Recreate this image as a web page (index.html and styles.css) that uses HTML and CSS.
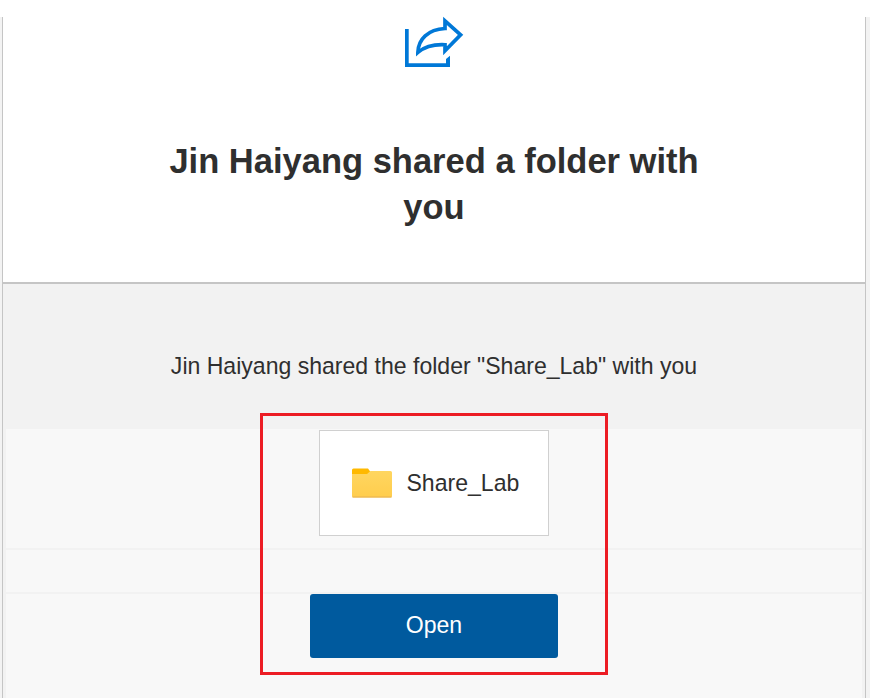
FILE: index.html
```html
<!DOCTYPE html>
<html lang="en">
<head>
<meta charset="utf-8">
<title>Shared folder</title>
<link rel="stylesheet" href="styles.css">
</head>
<body>
<main class="mail">
  <header class="intro">
    <svg class="share-icon" width="60" height="52" viewBox="0 0 60 52" fill="none" stroke="#0078d7">
      <path d="M1 13H4.7V47.3H42V43L46 39.7V51H1Z" fill="#0078d7" stroke="none"/>
      <path d="M41 4.8V12.5C24 13.5 14.2 23 13.9 36.4C21 30.5 29 28.2 41 28.8V34.8L56.6 18.9Z" stroke-width="3.7"/>
    </svg>
    <h1>Jin Haiyang shared a folder with you</h1>
  </header>
  <section class="content">
    <p class="message">Jin Haiyang shared the folder "Share_Lab" with you</p>
    <div class="row file-row">
      <div class="file">
        <svg class="folder" width="42" height="32" viewBox="0 0 42 32">
          <defs><linearGradient id="folder" x2="0" y2="1"><stop stop-color="#ffd660"/><stop offset="1" stop-color="#ffcd4d"/></linearGradient></defs>
          <path d="M1 9V3Q1 1.5 2.5 1.5H17L19.5 5L17 8Z" fill="#ffb900"/>
          <path d="M1 7H16L19.5 4H39.5Q41 4 41 5.5V29Q41 30.5 39.5 30.5H2.5Q1 30.5 1 29Z" fill="url(#folder)"/>
          <path d="M1.5 30H40.5" stroke="#e6b052"/>
        </svg>
        <span>Share_Lab</span>
      </div>
    </div>
    <div class="row spacer"></div>
    <div class="row action-row"><a class="open">Open</a></div>
  </section>
  <div class="highlight"></div>
</main>
</body>
</html>
```
FILE: styles.css
```css
* { box-sizing: border-box; }
body {
  margin: 0;
  height: 698px;
  padding-top: 17px;
  overflow: hidden;
  background: linear-gradient(#fff 17px, #f3f3f3 17px);
  color: #2f2f2f;
  font-family: "Liberation Sans", Arial, sans-serif;
}
.mail {
  width: 864px;
  height: 681px;
  margin-left: 2px;
  border: solid #c5c5c5;
  border-width: 0 1px;
  background: #f2f2f2;
}
.intro {
  display: flex;
  flex-direction: column;
  align-items: center;
  height: 267px;
  border-bottom: 2px solid #c5c5c5;
  background: #fff;
}
.share-icon { flex: none; margin-top: -1px; }
h1 {
  width: 540px;
  margin: 70px 0 0;
  font-size: 34.5px;
  line-height: 46px;
  text-align: center;
}
.message {
  margin: 0;
  height: 145px;
  padding-top: 68px;
  font-size: 23.05px;
  line-height: 28px;
  text-align: center;
}
.row {
  display: flex;
  justify-content: center;
  margin: 0 3px 2px;
  background: #f8f8f8;
}
.file-row { height: 119px; padding-top: 1px; }
.file {
  display: flex;
  align-items: center;
  width: 230px;
  height: 106px;
  padding-left: 31px;
  border: 1px solid #d0d0d0;
  background: #fff;
  font-size: 23.05px;
}
.folder { margin-right: 13.5px; }
.spacer { height: 42px; }
.action-row { height: 110px; }
.open {
  width: 248px;
  height: 64px;
  border-radius: 3px;
  background: #005a9e;
  color: #fff;
  font-size: 23.05px;
  line-height: 63px;
  text-align: center;
}
.highlight {
  position: absolute;
  left: 260px;
  top: 413px;
  width: 348px;
  height: 262px;
  border: 3px solid #ec1c24;
}
```
